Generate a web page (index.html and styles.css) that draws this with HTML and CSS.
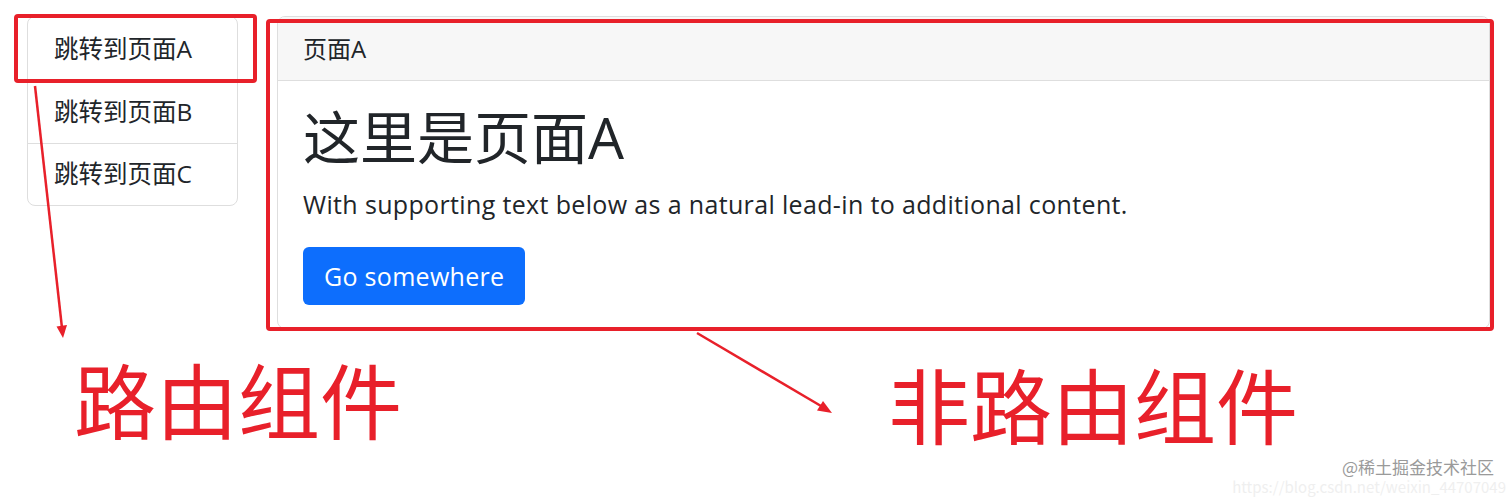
FILE: index.html
```html
<!DOCTYPE html>
<html>
<head>
  <meta charset="utf-8">
  <title>路由组件与非路由组件</title>
  <link rel="stylesheet" href="styles.css">
</head>
<body>

<div class="shot">

  <!-- app -->
  <div class="app">
    <div class="list-group">
      <a class="list-item">跳转到页面A</a>
      <a class="list-item">跳转到页面B</a>
      <a class="list-item">跳转到页面C</a>
    </div>

    <div class="card">
      <div class="card-header">页面A</div>
      <div class="card-body">
        <h1 class="card-title">这里是页面A</h1>
        <p class="card-text">With supporting text below as a natural lead-in to additional content.</p>
        <a class="btn">Go somewhere</a>
      </div>
    </div>
  </div>

  <!-- labels -->
  <div class="labels">
    <span class="label label-route">路由组件</span>
    <span class="label label-plain">非路由组件</span>
  </div>

  <!-- annotation marks -->
  <svg class="marks" width="1512" height="498" viewBox="0 0 1512 498">
    <rect x="16" y="16" width="239" height="65" rx="2" fill="none" stroke="#e8202a" stroke-width="4"/>
    <rect x="268" y="21" width="1224" height="308" rx="2" fill="none" stroke="#e8202a" stroke-width="4"/>
    <line x1="35" y1="86" x2="62" y2="328" stroke="#e8202a" stroke-width="2.5"/>
    <polygon points="63,338 67,325 56.5,326.5" fill="#e8202a"/>
    <line x1="697" y1="333" x2="821" y2="406" stroke="#e8202a" stroke-width="2.5"/>
    <polygon points="832,413 817,410.5 823,401" fill="#e8202a"/>
  </svg>

  <div class="watermark">
    <span class="wm-main">@稀土掘金技术社区</span>
    <span class="wm-url">https://blog.csdn.net/weixin_44707049</span>
  </div>

</div>

</body>
</html>
```

FILE: styles.css
```css
body{
  margin: 0;
  padding: 0;
  background: #ffffff;
  color: #212529;
  font-family: "Open Sans", "Noto Sans CJK SC", sans-serif;
}

.shot{
  position: relative;
  width: 1512px;
  height: 498px;
  overflow: hidden;
}

.app{
  display: flex;
  align-items: flex-start;
  gap: 39px;
  padding: 16px 0 0 27px;
}

/* list */
.list-group{
  display: flex;
  flex-direction: column;
  width: 209px;
  border: 1px solid #dedede;
  border-radius: 8px;
}

.list-item{
  display: block;
  height: 62px;
  line-height: 60px;
  padding: 0 26px;
  font-size: 24.5px;
  color: #212529;
  border-top: 1px solid #dedede;
  box-sizing: border-box;
}

.list-item:first-child{
  border-top: none;
  height: 64px;
  line-height: 64px;
}

/* card */
.card{
  width: 1211px;
  border: 1px solid #dedede;
  border-radius: 8px;
  overflow: hidden;
}

.card-header{
  height: 63px;
  line-height: 63px;
  padding: 0 25px;
  font-size: 24px;
  background: #f7f7f7;
  border-bottom: 1px solid #dedede;
}

.card-body{
  padding: 22px 25px 23px;
}

.card-title{
  margin: 0;
  font-size: 57px;
  font-weight: 400;
  line-height: 1.2;
}

.card-text{
  margin: 15px 0 23px;
  font-size: 25px;
  letter-spacing: 0.35px;
  line-height: 1.5;
}

.btn{
  display: inline-block;
  height: 58px;
  line-height: 58px;
  padding: 0 21px;
  font-size: 25px;
  letter-spacing: 0.3px;
  color: #ffffff;
  background: #0d6efd;
  border-radius: 6px;
}

/* big red labels */
.labels{
  display: flex;
  align-items: flex-start;
  margin-top: 28px;
}

.label{
  font-family: "Noto Sans CJK SC", sans-serif;
  font-size: 82px;
  line-height: 1;
  color: #e8202a;
}

.label-route{
  margin-left: 74px;
}

.label-plain{
  margin-left: 486px;
  margin-top: 5px;
}

/* overlays */
.marks{
  position: absolute;
  left: 0;
  top: 0;
  pointer-events: none;
}

.watermark{
  position: absolute;
  right: 6px;
  bottom: 4px;
  display: flex;
  flex-direction: column;
  align-items: flex-end;
  font-family: "Noto Sans CJK SC", sans-serif;
}

.wm-main{
  font-size: 17px;
  color: #9a9a9a;
  margin-right: 12px;
}

.wm-url{
  font-size: 15px;
  color: #efefef;
  line-height: 1;
}
```
